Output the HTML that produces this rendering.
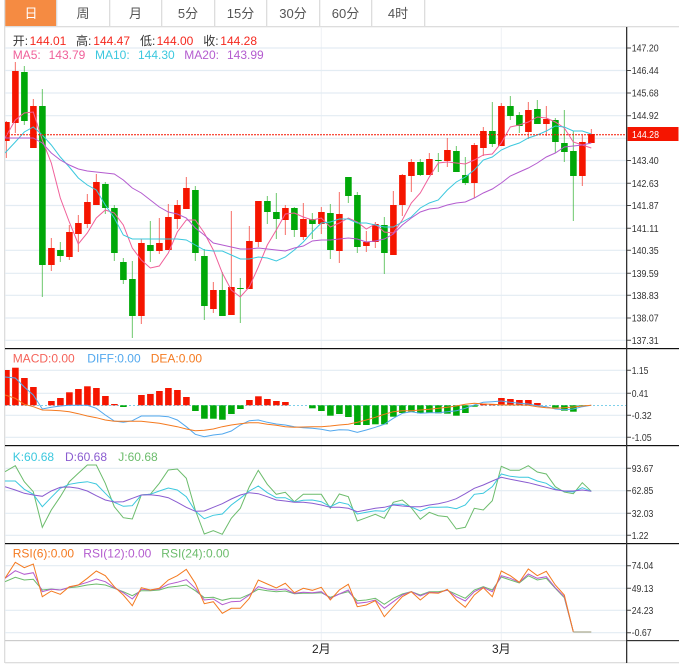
<!DOCTYPE html>
<html><head><meta charset="utf-8"><style>
html,body{margin:0;padding:0;background:#fff;width:679px;height:667px;overflow:hidden}
svg{display:block}
text{font-family:"Liberation Sans","Noto Sans CJK SC",sans-serif}
.tab{font-size:13px;fill:#555;text-anchor:middle}
.lb{font-size:10px;fill:#333}
.t{font-size:12px}
</style></head><body>
<svg width="679" height="667" viewBox="0 0 679 667" xmlns="http://www.w3.org/2000/svg">
<defs><clipPath id="c"><rect x="5" y="27" width="621" height="613"/></clipPath></defs>
<!-- tabs -->
<rect x="5" y="0" width="51" height="26" fill="#f58b42"/>
<g fill="#ddd">
<rect x="4" y="0" width="1.3" height="663"/>
<rect x="5" y="26" width="674" height="1.3"/>
<rect x="56" y="0" width="1.3" height="26"/><rect x="109" y="0" width="1.3" height="26"/><rect x="161" y="0" width="1.3" height="26"/><rect x="214" y="0" width="1.3" height="26"/><rect x="266" y="0" width="1.3" height="26"/><rect x="319" y="0" width="1.3" height="26"/><rect x="371" y="0" width="1.3" height="26"/><rect x="424" y="0" width="1.3" height="26"/>
<rect x="5" y="662" width="674" height="1.3"/>
</g>
<text class="tab" x="31" y="18" style="fill:#fff">日</text>
<text class="tab" x="83" y="18">周</text>
<text class="tab" x="135.500" y="18">月</text>
<text class="tab" x="188" y="18">5分</text>
<text class="tab" x="240.500" y="18">15分</text>
<text class="tab" x="293" y="18">30分</text>
<text class="tab" x="345.500" y="18">60分</text>
<text class="tab" x="398" y="18">4时</text>
<!-- grid -->
<g stroke="#eef2f5" stroke-width="1"><path d="M321.300 27V644M501.300 27V644"/></g>
<g stroke="#e3ecf3" stroke-width="1.200" fill="none">
<path d="M5 48H626M5 70.500H626M5 93H626M5 115.700H626M5 138.300H626M5 160.500H626M5 183.300H626M5 205.500H626M5 228.300H626M5 250.300H626M5 273.300H626M5 295.300H626M5 318H626M5 340.300H626"/>
<path d="M5 370.300H626M5 393.300H626M5 415.300H626M5 437.300H626"/>
<path d="M5 468.300H626M5 490.700H626M5 513.300H626M5 535.300H626"/>
<path d="M5 565.700H626M5 588.300H626M5 610.300H626M5 632.700H626"/>
</g>
<g clip-path="url(#c)">
<!-- wicks -->
<path stroke="#f54a40" stroke-opacity=".8" stroke-width="1" fill="none" d="M6.330 121V158M15.330 62V133M33.330 99V148M51.330 238V271M69.330 225V260M78.330 215V252M87.330 194V228M96.330 174V205M141.330 239V324M159.330 218V254M168.330 204V250M177.330 200V229M186.330 177V209M213.330 282V313M231.330 211V315M249.330 226V289M258.330 201V247M285.330 205V235M303.330 203V240M321.330 207V234M339.330 192V263M366.330 231V252M375.330 222V248M393.330 191V255M402.330 174V216M411.330 159V192M429.330 153V175M447.330 138V167M474.330 143V198M483.330 127V156M501.330 103V146M528.330 102V139M546.330 106V136M582.330 135V186M591.330 129V143"/>
<path stroke="#3bb53b" stroke-opacity=".75" stroke-width="1" fill="none" d="M24.330 66V125M42.330 89V297M60.330 242V262M105.330 182V214M114.330 205V261M123.330 258V284M132.330 261V338M150.330 221V262M195.330 186V261M204.330 249V320M222.330 272V316M240.330 278V323M267.330 196V224M276.330 193V239M294.330 207V237M312.330 213V239M330.330 204V259M348.330 177V203M357.330 192V253M384.330 217V274M420.330 159V176M438.330 153V172M456.330 146V172M465.330 157V185M492.330 102V147M510.330 96V120M519.330 112V133M537.330 100V124M555.330 118V153M564.330 110V162M573.330 131V221"/>
<!-- bodies -->
<g fill="#f51500">
<rect x="3.100" y="122" width="6.600" height="19"/><rect x="12.100" y="71" width="6.600" height="52"/><rect x="30.100" y="106" width="6.600" height="42"/><rect x="48.100" y="248" width="6.600" height="17"/><rect x="66.100" y="232" width="6.600" height="25"/><rect x="75.100" y="223" width="6.600" height="11"/><rect x="84.100" y="202" width="6.600" height="22"/><rect x="93.100" y="182" width="6.600" height="23"/><rect x="138.100" y="243" width="6.600" height="73"/><rect x="156.100" y="243" width="6.600" height="8"/><rect x="165.100" y="217" width="6.600" height="33"/><rect x="174.100" y="205" width="6.600" height="14"/><rect x="183.100" y="188" width="6.600" height="21"/><rect x="210.100" y="290" width="6.600" height="19"/><rect x="228.100" y="287" width="6.600" height="28"/><rect x="246.100" y="241" width="6.600" height="48"/><rect x="255.100" y="201" width="6.600" height="41"/><rect x="282.100" y="208" width="6.600" height="12"/><rect x="300.100" y="219" width="6.600" height="18"/><rect x="318.100" y="212" width="6.600" height="12"/><rect x="336.100" y="214" width="6.600" height="37"/><rect x="363.100" y="242" width="6.600" height="4"/><rect x="372.100" y="224" width="6.600" height="18"/><rect x="390.100" y="205" width="6.600" height="50"/><rect x="399.100" y="175" width="6.600" height="30"/><rect x="408.100" y="162" width="6.600" height="14"/><rect x="426.100" y="159" width="6.600" height="16"/><rect x="444.100" y="150" width="6.600" height="11"/><rect x="471.100" y="145" width="6.600" height="38"/><rect x="480.100" y="131" width="6.600" height="17"/><rect x="498.100" y="106" width="6.600" height="40"/><rect x="525.100" y="110" width="6.600" height="22"/><rect x="543.100" y="119" width="6.600" height="5"/><rect x="579.100" y="142" width="6.600" height="34"/><rect x="588.100" y="134" width="6.600" height="9"/>
</g>
<g fill="#00a808">
<rect x="21.100" y="72" width="6.600" height="49"/><rect x="39.100" y="106" width="6.600" height="159"/><rect x="57.100" y="250" width="6.600" height="6"/><rect x="102.100" y="184" width="6.600" height="24"/><rect x="111.100" y="208" width="6.600" height="45"/><rect x="120.100" y="262" width="6.600" height="18"/><rect x="129.100" y="279" width="6.600" height="37"/><rect x="147.100" y="245" width="6.600" height="6"/><rect x="192.100" y="190" width="6.600" height="63"/><rect x="201.100" y="256" width="6.600" height="50"/><rect x="219.100" y="290" width="6.600" height="26"/><rect x="237.100" y="288" width="6.600" height="1"/><rect x="264.100" y="201" width="6.600" height="11"/><rect x="273.100" y="212" width="6.600" height="7"/><rect x="291.100" y="208" width="6.600" height="22"/><rect x="309.100" y="219" width="6.600" height="5"/><rect x="327.100" y="213" width="6.600" height="37"/><rect x="345.100" y="177" width="6.600" height="19"/><rect x="354.100" y="195" width="6.600" height="52"/><rect x="381.100" y="225" width="6.600" height="28"/><rect x="417.100" y="162" width="6.600" height="13"/><rect x="435.100" y="160" width="6.600" height="1"/><rect x="453.100" y="151" width="6.600" height="21"/><rect x="462.100" y="175" width="6.600" height="8"/><rect x="489.100" y="131" width="6.600" height="13"/><rect x="507.100" y="106" width="6.600" height="10"/><rect x="516.100" y="115" width="6.600" height="11"/><rect x="534.100" y="109" width="6.600" height="15"/><rect x="552.100" y="120" width="6.600" height="22"/><rect x="561.100" y="143" width="6.600" height="9"/><rect x="570.100" y="151" width="6.600" height="25"/>
</g>
<!-- MA lines -->
<g fill="none" stroke-width="1">
<polyline stroke="#f0609a" points="5,138 15.300,120 24.300,113 33.300,112 42.300,140 51.300,163 60.300,198 69.300,222 78.300,244 87.300,233 96.300,218 105.300,210 114.300,213 123.300,225 132.300,248 141.300,260 150.300,268 159.300,266 168.300,253 177.300,232 186.300,220 195.300,220 204.300,233 213.300,250 222.300,273 231.300,290 240.300,297 249.300,287 258.300,267 267.300,245 276.300,230 285.300,214 294.300,213 303.300,217 312.300,220 321.300,218 330.300,227 339.300,223 348.300,218 357.300,222 366.300,229 375.300,224 384.300,232 393.300,233 402.300,220 411.300,203 420.300,193 429.300,177 438.300,163 447.300,162 456.300,163 465.300,164 474.300,160 483.300,155 492.300,154 501.300,143 510.300,127 519.300,125 528.300,122 537.300,117 546.300,118 555.300,122 564.300,128 573.300,142 582.300,145 591.300,148"/>
<polyline stroke="#3cc8de" points="5,153 15.300,142 24.300,132 33.300,127 42.300,135 51.300,145 60.300,157 69.300,167 78.300,178 87.300,185 96.300,190 105.300,205 114.300,218 123.300,235 132.300,239 141.300,239 150.300,239 159.300,239 168.300,239 177.300,239 186.300,240 195.300,245 204.300,250 213.300,251 222.300,251 231.300,255 240.300,259 249.300,259 258.300,257 267.300,258 276.300,261 285.300,257 294.300,250 303.300,242 312.300,232 321.300,223 330.300,222 339.300,219 348.300,219 357.300,223 366.300,223 375.300,225 384.300,227 393.300,227 402.300,222 411.300,217 420.300,208 429.300,203 438.300,200 447.300,190 456.300,182 465.300,177 474.300,170 483.300,160 492.300,157 501.300,150 510.300,146 519.300,143 528.300,138 537.300,135 546.300,131 555.300,126 564.300,127 573.300,131 582.300,131 591.300,134"/>
<polyline stroke="#b45ccf" points="5,138 15.300,138 24.300,138 33.300,138 42.300,143 51.300,153 60.300,160 69.300,165 78.300,169 87.300,171 96.300,172 105.300,173 114.300,174 123.300,180 132.300,188 141.300,193 150.300,200 159.300,207 168.300,212 177.300,214 186.300,218 195.300,228 204.300,235 213.300,243 222.300,245 231.300,247 240.300,249 249.300,249 258.300,248 267.300,249 276.300,250 285.300,251 294.300,248 303.300,246 312.300,241 321.300,240 330.300,240 339.300,239 348.300,238 357.300,239 366.300,242 375.300,241 384.300,239 393.300,234 402.300,225 411.300,218 420.300,212 429.300,209 438.300,208 447.300,205 456.300,203 465.300,202 474.300,198 483.300,193 492.300,189 501.300,183 510.300,176 519.300,172 528.300,168 537.300,163 546.300,157 555.300,153 564.300,147 573.300,146 582.300,145 591.300,143"/>
</g>
<path d="M5 134.700H626" stroke="#f51500" stroke-width="1" stroke-dasharray="2 1" fill="none"/>
<!-- MACD -->
<path d="M5 405.500H626" stroke="#7fd0ea" stroke-width="1" stroke-dasharray="2 2" fill="none"/>
<g fill="#f51500">
<rect x="3.100" y="370" width="6.600" height="35.300"/><rect x="12.100" y="367.700" width="6.600" height="37.600"/><rect x="21.100" y="378" width="6.600" height="27.300"/><rect x="30.100" y="387" width="6.600" height="18.300"/><rect x="48.100" y="401" width="6.600" height="4.300"/><rect x="57.100" y="398" width="6.600" height="7.300"/><rect x="66.100" y="392.300" width="6.600" height="13"/><rect x="75.100" y="389" width="6.600" height="16.300"/><rect x="84.100" y="386.300" width="6.600" height="19"/><rect x="93.100" y="388" width="6.600" height="17.300"/><rect x="102.100" y="396" width="6.600" height="9.300"/><rect x="111.100" y="404" width="6.600" height="1.300"/><rect x="138.100" y="395" width="6.600" height="10.300"/><rect x="147.100" y="394" width="6.600" height="11.300"/><rect x="156.100" y="391" width="6.600" height="14.300"/><rect x="165.100" y="388" width="6.600" height="17.300"/><rect x="174.100" y="390" width="6.600" height="15.300"/><rect x="183.100" y="397" width="6.600" height="8.300"/><rect x="246.100" y="400" width="6.600" height="5.300"/><rect x="255.100" y="396.300" width="6.600" height="9"/><rect x="264.100" y="399" width="6.600" height="6.300"/><rect x="273.100" y="401" width="6.600" height="4.300"/><rect x="282.100" y="402" width="6.600" height="3.300"/><rect x="480.100" y="403.700" width="6.600" height="1.600"/><rect x="489.100" y="404" width="6.600" height="1.300"/><rect x="498.100" y="398" width="6.600" height="7.300"/><rect x="507.100" y="399" width="6.600" height="6.300"/><rect x="516.100" y="400" width="6.600" height="5.300"/><rect x="525.100" y="400" width="6.600" height="5.300"/><rect x="534.100" y="403" width="6.600" height="2.300"/>
</g>
<g fill="#00a808">
<rect x="120.100" y="405.300" width="6.600" height="1.700"/><rect x="192.100" y="405.300" width="6.600" height="5.700"/><rect x="201.100" y="405.300" width="6.600" height="13.400"/><rect x="210.100" y="405.300" width="6.600" height="13.400"/><rect x="219.100" y="405.300" width="6.600" height="14.400"/><rect x="228.100" y="405.300" width="6.600" height="8.700"/><rect x="237.100" y="405.300" width="6.600" height="3.700"/><rect x="309.100" y="405.300" width="6.600" height="3"/><rect x="318.100" y="405.300" width="6.600" height="5.700"/><rect x="327.100" y="405.300" width="6.600" height="10.400"/><rect x="336.100" y="405.300" width="6.600" height="8.700"/><rect x="345.100" y="405.300" width="6.600" height="11.700"/><rect x="354.100" y="405.300" width="6.600" height="19.700"/><rect x="363.100" y="405.300" width="6.600" height="19.700"/><rect x="372.100" y="405.300" width="6.600" height="19"/><rect x="381.100" y="405.300" width="6.600" height="19"/><rect x="390.100" y="405.300" width="6.600" height="11.400"/><rect x="399.100" y="405.300" width="6.600" height="7.700"/><rect x="408.100" y="405.300" width="6.600" height="6.400"/><rect x="417.100" y="405.300" width="6.600" height="8"/><rect x="426.100" y="405.300" width="6.600" height="7.400"/><rect x="435.100" y="405.300" width="6.600" height="8"/><rect x="444.100" y="405.300" width="6.600" height="8.400"/><rect x="453.100" y="405.300" width="6.600" height="10.400"/><rect x="462.100" y="405.300" width="6.600" height="7.700"/><rect x="471.100" y="405.300" width="6.600" height="1.400"/><rect x="552.100" y="405.300" width="6.600" height="2.400"/><rect x="561.100" y="405.300" width="6.600" height="5.400"/><rect x="570.100" y="405.300" width="6.600" height="6.400"/><rect x="579.100" y="405.300" width="6.600" height="0.700"/>
</g>
<g fill="none" stroke-width="1">
<polyline stroke="#52a8ee" points="5,377 15.300,378 24.300,387 33.300,395 42.300,409 51.300,407.300 60.300,406 69.300,405.300 78.300,405.300 87.300,405.300 96.300,408.300 105.300,415 114.300,421 123.300,422.300 132.300,420.700 141.300,416 150.300,416 159.300,416 168.300,416.700 177.300,420 186.300,426.700 195.300,434.300 204.300,436.700 213.300,435 222.300,434 231.300,431 240.300,425 249.300,420.700 258.300,420 267.300,422.300 276.300,424 285.300,425 294.300,426.700 303.300,427.700 312.300,428.300 321.300,429.300 330.300,431 339.300,429.700 348.300,430 357.300,432.300 366.300,430 375.300,427.300 384.300,424.300 393.300,418.300 402.300,413.300 411.300,411.700 420.300,413.300 429.300,412.700 438.300,412.700 447.300,411.700 456.300,410.700 465.300,408.300 474.300,405 483.300,402.300 492.300,401.700 501.300,401 510.300,402.300 519.300,403.300 528.300,404 537.300,405.700 546.300,406.700 555.300,409 564.300,409.700 573.300,409 582.300,406.700 591.300,405.300"/>
<polyline stroke="#f47a20" points="5,395 15.300,398.300 24.300,404.300 33.300,406.700 42.300,410 51.300,410.300 60.300,410.700 69.300,411.700 78.300,413.700 87.300,416 96.300,417.700 105.300,420 114.300,421.300 123.300,421.300 132.300,421.300 141.300,421.300 150.300,422.300 159.300,423.300 168.300,425 177.300,426.700 186.300,429 195.300,430.700 204.300,430.300 213.300,429 222.300,426.700 231.300,425 240.300,423.700 249.300,422.700 258.300,422.700 267.300,424.300 276.300,425.300 285.300,426.700 294.300,427.300 303.300,427 312.300,426.700 321.300,426.700 330.300,426 339.300,425 348.300,424.300 357.300,422.300 366.300,420 375.300,417.300 384.300,414.300 393.300,411.700 402.300,410.700 411.300,410.700 420.300,410 429.300,409.300 438.300,408.300 447.300,407.300 456.300,406 465.300,404.300 474.300,403.300 483.300,404 492.300,404.300 501.300,404.700 510.300,405 519.300,405 528.300,405.300 537.300,406.700 546.300,407.700 555.300,408.300 564.300,407.700 573.300,407 582.300,406 591.300,405.300"/>
<!-- KDJ -->
<polyline stroke="#6cbc6c" points="5,471.700 15.300,465.700 24.300,481.700 33.300,491.700 42.300,527.300 51.300,510 60.300,496.700 69.300,481.700 78.300,473.300 87.300,465 96.300,465 105.300,483.300 114.300,506.700 123.300,517.700 132.300,519 141.300,495 150.300,494.300 159.300,483.300 168.300,470 177.300,469 186.300,478.300 195.300,510 204.300,534 213.300,530.700 222.300,534.300 231.300,518.300 240.300,508.300 249.300,486.700 258.300,470.300 267.300,484.300 276.300,494.300 285.300,492.300 294.300,501.700 303.300,494.300 312.300,494.300 321.300,494.300 330.300,508.300 339.300,494 348.300,496.700 357.300,521 366.300,517.700 375.300,514.300 384.300,518.300 393.300,502.300 402.300,500 411.300,507.700 420.300,519.300 429.300,512.300 438.300,515.700 447.300,516.700 456.300,529 465.300,527.300 474.300,508.300 483.300,510 492.300,500.700 501.300,466.300 510.300,470.300 519.300,470.300 528.300,465.700 537.300,472 546.300,474 555.300,486.700 564.300,492 573.300,493.700 582.300,482.700 591.300,491.300"/>
<polyline stroke="#3cc8de" points="5,481 15.300,481 24.300,489.300 33.300,494.300 42.300,506.700 51.300,497.300 60.300,488.300 69.300,484.300 78.300,482.700 87.300,481.700 96.300,484 105.300,493.300 114.300,502.300 123.300,506.300 132.300,505.700 141.300,495 150.300,494.300 159.300,491 168.300,488 177.300,490 186.300,496.700 195.300,511 204.300,518.700 213.300,515.300 222.300,514 231.300,505 240.300,498.300 249.300,491 258.300,486 267.300,492.700 276.300,497.700 285.300,497.700 294.300,502 303.300,500.300 312.300,500 321.300,501.700 330.300,506.700 339.300,502.300 348.300,504.300 357.300,514 366.300,512.300 375.300,510.700 384.300,511.300 393.300,504.300 402.300,504.300 411.300,507 420.300,511 429.300,507.300 438.300,507.300 447.300,507 456.300,508.700 465.300,505 474.300,494.300 483.300,493.300 492.300,486.700 501.300,474 510.300,476.300 519.300,477.300 528.300,477.300 537.300,481 546.300,483.300 555.300,489 564.300,491.300 573.300,492 582.300,487.700 591.300,491.300"/>
<polyline stroke="#8a5cd0" points="5,486.700 15.300,490 24.300,493.300 33.300,495 42.300,496.300 51.300,491 60.300,487.300 69.300,487 78.300,488.300 87.300,491 96.300,495.700 105.300,500 114.300,502 123.300,501.700 132.300,498.300 141.300,495 150.300,494.700 159.300,495.700 168.300,497.700 177.300,502.300 186.300,507.300 195.300,511.300 204.300,511 213.300,507.300 222.300,503.700 231.300,499 240.300,495 249.300,492.700 258.300,493.700 267.300,496.700 276.300,500 285.300,501 294.300,502.300 303.300,502.300 312.300,503.300 321.300,505 330.300,507.300 339.300,507.300 348.300,508.300 357.300,511.700 366.300,510 375.300,508.300 384.300,507.300 393.300,505 402.300,506 411.300,506.700 420.300,506.700 429.300,505 438.300,503.700 447.300,501.700 456.300,498.700 465.300,493.700 474.300,488.300 483.300,485 492.300,481 501.300,477.300 510.300,479.300 519.300,481 528.300,482.700 537.300,485 546.300,487.300 555.300,489.700 564.300,491 573.300,491 582.300,490 591.300,491.300"/>
<!-- RSI -->
<polyline stroke="#6cbc6c" points="5,581.700 15.300,577.300 24.300,580 33.300,579.300 42.300,590 51.300,589 60.300,590 69.300,587.700 78.300,586.700 87.300,585 96.300,584 105.300,585 114.300,588.300 123.300,591.700 132.300,595.700 141.300,590.700 150.300,590.700 159.300,590 168.300,587.300 177.300,586.300 186.300,585 195.300,590.700 204.300,597.700 213.300,597.300 222.300,600.300 231.300,598.300 240.300,598.300 249.300,594.300 258.300,589.300 267.300,590.700 276.300,591.700 285.300,591 294.300,593.700 303.300,593.300 312.300,593.300 321.300,592.700 330.300,597.300 339.300,594 348.300,591.700 357.300,600.700 366.300,600 375.300,598.300 384.300,604.300 393.300,598.300 402.300,594 411.300,591.700 420.300,595 429.300,591.700 438.300,591.700 447.300,590.300 456.300,594.300 465.300,598.300 474.300,590 483.300,586.700 492.300,590 501.300,577 510.300,580 519.300,583 528.300,575.700 537.300,580 546.300,578.300 555.300,588.300 564.300,597.700 573.300,631.700"/>
<polyline stroke="#b45ccf" points="5,578.300 15.300,570.700 24.300,574.300 33.300,572.700 42.300,591.700 51.300,589.300 60.300,590 69.300,587.300 78.300,585 87.300,582.300 96.300,579 105.300,581.700 114.300,587.700 123.300,592.700 132.300,599 141.300,589.300 150.300,590 159.300,589 168.300,584.300 177.300,582.300 186.300,579.700 195.300,588.300 204.300,600 213.300,599 222.300,604.700 231.300,601.700 240.300,601.300 249.300,595 258.300,586.700 267.300,589 276.300,590 285.300,589 294.300,593.300 303.300,592.300 312.300,592.700 321.300,591.700 330.300,598.300 339.300,594 348.300,590 357.300,603.300 366.300,602.300 375.300,600 384.300,608.300 393.300,601.700 402.300,595 411.300,591.700 420.300,596 429.300,592.300 438.300,592.700 447.300,590 456.300,596.700 465.300,601 474.300,591.700 483.300,587.300 492.300,591.700 501.300,575.700 510.300,578.300 519.300,582.300 528.300,574 537.300,578.300 546.300,576.700 555.300,587.700 564.300,596.700 573.300,631.700"/>
<polyline stroke="#f47a20" points="5,578.300 15.300,562.300 24.300,567.700 33.300,564 42.300,596.700 51.300,591 60.300,594.300 69.300,586.700 78.300,585 87.300,578.300 96.300,571 105.300,575.700 114.300,586.700 123.300,595 132.300,605.700 141.300,587.700 150.300,590 159.300,588.300 168.300,580 177.300,575.700 186.300,569.300 195.300,583.300 204.300,603.700 213.300,601.700 222.300,613.300 231.300,608.300 240.300,608.300 249.300,598.300 258.300,580 267.300,584 276.300,588 285.300,583.300 294.300,592.700 303.300,588.300 312.300,590.300 321.300,587.300 330.300,600 339.300,590 348.300,584.300 357.300,606.700 366.300,605 375.300,600.700 384.300,616.700 393.300,606.700 402.300,596.700 411.300,591.700 420.300,600 429.300,592.700 438.300,593.300 447.300,589.300 456.300,600 465.300,607.300 474.300,595 483.300,587.700 492.300,596.700 501.300,571 510.300,575.700 519.300,582.300 528.300,569 537.300,575.700 546.300,571.300 555.300,585 564.300,595 573.300,631.700"/>
</g>
<path d="M573.300 632H591.300" stroke="#b9b8a2" stroke-width="1.500" fill="none"/>
</g>
<!-- panel lines -->
<rect x="5" y="348" width="674" height="1.200" fill="#111"/>
<rect x="5" y="445" width="674" height="1.200" fill="#111"/>
<rect x="5" y="543" width="674" height="1.200" fill="#111"/>
<rect x="5" y="640" width="621" height="1.200" fill="#ccc"/>
<rect x="626" y="640" width="53" height="1.200" fill="#333"/>
<rect x="626" y="27" width="1.300" height="636" fill="#333"/>
<!-- ticks -->
<path stroke="#444" stroke-width="1" d="M627 48h4M627 70.500h4M627 93h4M627 115.700h4M627 160.500h4M627 183.300h4M627 205.500h4M627 228.300h4M627 250.300h4M627 273.300h4M627 295.300h4M627 318h4M627 340.300h4M627 370.300h4M627 393.300h4M627 415.300h4M627 437.300h4M627 468.300h4M627 490.700h4M627 513.300h4M627 535.300h4M627 565.700h4M627 588.300h4M627 610.300h4M627 632.700h4" fill="none"/>
<g class="lb">
<text class="lb" x="631.700" y="51.500" textLength="27" lengthAdjust="spacingAndGlyphs">147.20</text>
<text class="lb" x="631.700" y="74" textLength="27" lengthAdjust="spacingAndGlyphs">146.44</text>
<text class="lb" x="631.700" y="96.500" textLength="27" lengthAdjust="spacingAndGlyphs">145.68</text>
<text class="lb" x="631.700" y="119.200" textLength="27" lengthAdjust="spacingAndGlyphs">144.92</text>
<text class="lb" x="631.700" y="164" textLength="27" lengthAdjust="spacingAndGlyphs">143.40</text>
<text class="lb" x="631.700" y="186.800" textLength="27" lengthAdjust="spacingAndGlyphs">142.63</text>
<text class="lb" x="631.700" y="209" textLength="27" lengthAdjust="spacingAndGlyphs">141.87</text>
<text class="lb" x="631.700" y="231.800" textLength="27" lengthAdjust="spacingAndGlyphs">141.11</text>
<text class="lb" x="631.700" y="253.800" textLength="27" lengthAdjust="spacingAndGlyphs">140.35</text>
<text class="lb" x="631.700" y="276.800" textLength="27" lengthAdjust="spacingAndGlyphs">139.59</text>
<text class="lb" x="631.700" y="298.800" textLength="27" lengthAdjust="spacingAndGlyphs">138.83</text>
<text class="lb" x="631.700" y="321.500" textLength="27" lengthAdjust="spacingAndGlyphs">138.07</text>
<text class="lb" x="631.700" y="343.800" textLength="27" lengthAdjust="spacingAndGlyphs">137.31</text>
<text class="lb" x="631.700" y="373.800" textLength="16.700" lengthAdjust="spacingAndGlyphs">1.15</text>
<text class="lb" x="631.700" y="396.800" textLength="16.700" lengthAdjust="spacingAndGlyphs">0.41</text>
<text class="lb" x="631.700" y="418.800" textLength="20" lengthAdjust="spacingAndGlyphs">-0.32</text>
<text class="lb" x="631.700" y="440.800" textLength="20" lengthAdjust="spacingAndGlyphs">-1.05</text>
<text class="lb" x="631.700" y="471.800" textLength="21.700" lengthAdjust="spacingAndGlyphs">93.67</text>
<text class="lb" x="631.700" y="494.200" textLength="21.700" lengthAdjust="spacingAndGlyphs">62.85</text>
<text class="lb" x="631.700" y="516.800" textLength="21.700" lengthAdjust="spacingAndGlyphs">32.03</text>
<text class="lb" x="631.700" y="538.800" textLength="16.700" lengthAdjust="spacingAndGlyphs">1.22</text>
<text class="lb" x="631.700" y="569.200" textLength="21.700" lengthAdjust="spacingAndGlyphs">74.04</text>
<text class="lb" x="631.700" y="591.800" textLength="21.700" lengthAdjust="spacingAndGlyphs">49.13</text>
<text class="lb" x="631.700" y="613.800" textLength="21.700" lengthAdjust="spacingAndGlyphs">24.23</text>
<text class="lb" x="631.700" y="636.200" textLength="20" lengthAdjust="spacingAndGlyphs">-0.67</text>
</g>
<!-- price tag -->
<rect x="627.500" y="127" width="51" height="14" fill="#f51500"/>
<text x="632" y="138" font-size="10" fill="#fff" textLength="27" lengthAdjust="spacingAndGlyphs" style="font-size:10px">144.28</text>
<!-- legends -->
<g class="t" font-size="12">
<text x="12.700" y="45" fill="#333">开:</text><text x="66.300" y="45" fill="#f5281e" text-anchor="end">144.01</text>
<text x="76" y="45" fill="#333">高:</text><text x="130" y="45" fill="#f5281e" text-anchor="end">144.47</text>
<text x="140" y="45" fill="#333">低:</text><text x="193.300" y="45" fill="#f5281e" text-anchor="end">144.00</text>
<text x="203.300" y="45" fill="#333">收:</text><text x="257" y="45" fill="#f5281e" text-anchor="end">144.28</text>
<text x="12.700" y="59" fill="#f0609a">MA5:</text><text x="85.300" y="59" fill="#f0609a" text-anchor="end">143.79</text>
<text x="95" y="59" fill="#3cc8de">MA10:</text><text x="174.700" y="59" fill="#3cc8de" text-anchor="end">144.30</text>
<text x="184.300" y="59" fill="#b45ccf">MA20:</text><text x="263.700" y="59" fill="#b45ccf" text-anchor="end">143.99</text>
<text x="12.700" y="362.500" fill="#f5635a">MACD:0.00</text>
<text x="87.300" y="362.500" fill="#52a8ee">DIFF:0.00</text>
<text x="150.700" y="362.500" fill="#f47a20">DEA:0.00</text>
<text x="12.700" y="461" fill="#3cc8de">K:60.68</text>
<text x="65" y="461" fill="#8a5cd0">D:60.68</text>
<text x="118.300" y="461" fill="#6cbc6c">J:60.68</text>
<text x="12.700" y="557.500" fill="#f47a20">RSI(6):0.00</text>
<text x="83.300" y="557.500" fill="#b45ccf">RSI(12):0.00</text>
<text x="161.300" y="557.500" fill="#6cbc6c">RSI(24):0.00</text>
<text x="321.300" y="653" fill="#222" text-anchor="middle" style="font-size:12px">2月</text>
<text x="501.300" y="653" fill="#222" text-anchor="middle" style="font-size:12px">3月</text>
</g>
</svg>
</body></html>
